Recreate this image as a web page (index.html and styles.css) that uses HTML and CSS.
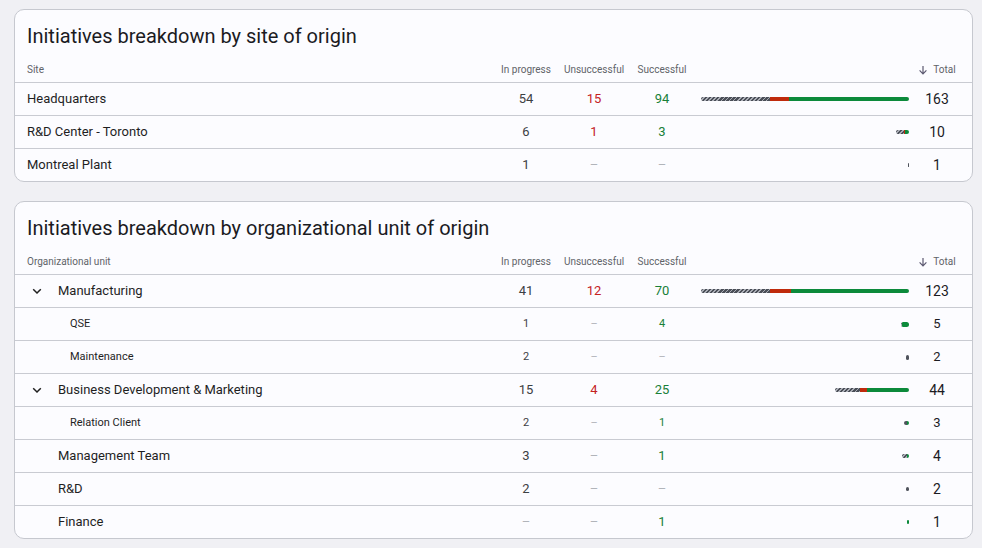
FILE: index.html
```html
<!DOCTYPE html>
<html lang="en">
<head>
<meta charset="utf-8">
<title>Initiatives breakdown</title>
<link rel="stylesheet" href="styles.css">
</head>
<body>
<main class="page">
  <section class="card">
    <h2 class="card-title">Initiatives breakdown by site of origin</h2>
    <div class="row head">
      <div class="name">Site</div>
      <div class="num">In progress</div>
      <div class="num">Unsuccessful</div>
      <div class="num">Successful</div>
      <div></div>
      <div class="num total-h"><svg class="sort" viewBox="0 0 10 10"><path d="M5 1V8.6M1.6 5.4L5 8.8L8.4 5.4"/></svg>Total</div>
    </div>
    <div class="row">
      <div class="name">Headquarters</div>
      <div class="num prog">54</div>
      <div class="num fail">15</div>
      <div class="num ok">94</div>
      <div class="barcell"><div class="bar"><span class="seg hatch" style="width:68.9px"></span><span class="seg red" style="width:19.1px"></span><span class="seg green" style="width:120px"></span></div></div>
      <div class="num total">163</div>
    </div>
    <div class="row">
      <div class="name">R&amp;D Center - Toronto</div>
      <div class="num prog">6</div>
      <div class="num fail">1</div>
      <div class="num ok">3</div>
      <div class="barcell"><div class="bar"><span class="seg hatch" style="width:7.7px"></span><span class="seg red" style="width:1.3px"></span><span class="seg green" style="width:3.8px"></span></div></div>
      <div class="num total">10</div>
    </div>
    <div class="row">
      <div class="name">Montreal Plant</div>
      <div class="num prog">1</div>
      <div class="num none">–</div>
      <div class="num none">–</div>
      <div class="barcell"><div class="bar"><span class="seg hatch solid" style="width:1.3px"></span></div></div>
      <div class="num total">1</div>
    </div>
  </section>

  <section class="card">
    <h2 class="card-title">Initiatives breakdown by organizational unit of origin</h2>
    <div class="row head">
      <div class="name">Organizational unit</div>
      <div class="num">In progress</div>
      <div class="num">Unsuccessful</div>
      <div class="num">Successful</div>
      <div></div>
      <div class="num total-h"><svg class="sort" viewBox="0 0 10 10"><path d="M5 1V8.6M1.6 5.4L5 8.8L8.4 5.4"/></svg>Total</div>
    </div>
    <div class="row">
      <div class="name unit"><span class="chev"><svg viewBox="0 0 12 12"><path d="M2.2 4.2L6 8L9.8 4.2"/></svg></span>Manufacturing</div>
      <div class="num prog">41</div>
      <div class="num fail">12</div>
      <div class="num ok">70</div>
      <div class="barcell"><div class="bar"><span class="seg hatch" style="width:69.3px"></span><span class="seg red" style="width:20.3px"></span><span class="seg green" style="width:118.4px"></span></div></div>
      <div class="num total">123</div>
    </div>
    <div class="row sub">
      <div class="name child">QSE</div>
      <div class="num prog">1</div>
      <div class="num none">–</div>
      <div class="num ok">4</div>
      <div class="barcell"><div class="bar tall"><span class="seg hatch" style="width:1.7px"></span><span class="seg green" style="width:6.8px"></span></div></div>
      <div class="num total">5</div>
    </div>
    <div class="row sub">
      <div class="name child">Maintenance</div>
      <div class="num prog">2</div>
      <div class="num none">–</div>
      <div class="num none">–</div>
      <div class="barcell"><div class="bar tall"><span class="seg hatch solid" style="width:3.4px"></span></div></div>
      <div class="num total">2</div>
    </div>
    <div class="row">
      <div class="name unit"><span class="chev"><svg viewBox="0 0 12 12"><path d="M2.2 4.2L6 8L9.8 4.2"/></svg></span>Business Development &amp; Marketing</div>
      <div class="num prog">15</div>
      <div class="num fail">4</div>
      <div class="num ok">25</div>
      <div class="barcell"><div class="bar"><span class="seg hatch" style="width:25.4px"></span><span class="seg red" style="width:6.8px"></span><span class="seg green" style="width:42.3px"></span></div></div>
      <div class="num total">44</div>
    </div>
    <div class="row sub">
      <div class="name child">Relation Client</div>
      <div class="num prog">2</div>
      <div class="num none">–</div>
      <div class="num ok">1</div>
      <div class="barcell"><div class="bar"><span class="seg hatch solid" style="width:3.4px"></span><span class="seg green" style="width:1.7px"></span></div></div>
      <div class="num total">3</div>
    </div>
    <div class="row">
      <div class="name unit"><span class="chev"></span>Management Team</div>
      <div class="num prog">3</div>
      <div class="num none">–</div>
      <div class="num ok">1</div>
      <div class="barcell"><div class="bar"><span class="seg hatch" style="width:5.1px"></span><span class="seg green" style="width:1.7px"></span></div></div>
      <div class="num total">4</div>
    </div>
    <div class="row">
      <div class="name unit"><span class="chev"></span>R&amp;D</div>
      <div class="num prog">2</div>
      <div class="num none">–</div>
      <div class="num none">–</div>
      <div class="barcell"><div class="bar"><span class="seg hatch solid" style="width:3.4px"></span></div></div>
      <div class="num total">2</div>
    </div>
    <div class="row">
      <div class="name unit"><span class="chev"></span>Finance</div>
      <div class="num none">–</div>
      <div class="num none">–</div>
      <div class="num ok">1</div>
      <div class="barcell"><div class="bar"><span class="seg green" style="width:1.7px"></span></div></div>
      <div class="num total">1</div>
    </div>
  </section>
</main>
</body>
</html>
```

FILE: styles.css
```css
* { box-sizing: border-box; }

html, body {
  margin: 0;
  padding: 0;
  background: #f0f0f4;
  font-family: Roboto, "Liberation Sans", Arial, sans-serif;
  color: #1f1f1f;
}

.page {
  padding: 9px 9px 0 14px;
  display: flex;
  flex-direction: column;
  gap: 19px;
}

.card {
  width: 959px;
  background: #fcfcff;
  border: 1px solid #c6c8cf;
  border-radius: 10px;
  overflow: hidden;
}

.card-title {
  margin: 0;
  padding: 14px 0 0 12px;
  font-size: 20px;
  line-height: 24px;
  font-weight: 400;
  color: #1b1b1f;
}

.row {
  display: grid;
  grid-template-columns: 1fr 68px 68px 68px 213px 56px;
  align-items: center;
  height: 33px;
  padding: 0 7px 1px 12px;
  border-top: 1px solid #c9cbd2;
  font-size: 13px;
}

.row.head {
  height: 34px;
  border-top: none;
  align-items: end;
  padding-bottom: 6px;
  font-size: 10px;
  line-height: 12px;
  color: #5f6368;
}

.name {
  white-space: nowrap;
  display: flex;
  align-items: center;
}

.num {
  text-align: center;
  font-variant-numeric: tabular-nums;
}

.total-h {
  display: flex;
  justify-content: center;
  align-items: center;
  gap: 5px;
}

.sort {
  width: 10px;
  height: 10px;
  fill: none;
  stroke: #5b5870;
  stroke-width: 1.2;
}

.prog { color: #3c4043; }
.fail { color: #c5221f; }
.ok { color: #188038; }
.none { color: #b1b4ba; }
.total { color: #1b1b1f; font-size: 14px; }

.barcell {
  display: flex;
  justify-content: flex-end;
  align-items: center;
  padding-top: 1px;
}

.bar {
  display: flex;
  height: 4px;
  border-radius: 2px;
  overflow: hidden;
}

.bar.tall { height: 5px; border-radius: 2.5px; }

.seg { display: block; height: 100%; }
.hatch { background: repeating-linear-gradient(135deg, #4a4e57 0 1.8px, #a9acb5 1.8px 2.9px); }
.hatch.solid { background: #4f535c; }
.red { background: #bf2a0c; }
.green { background: #0c8a3b; }

.chev {
  width: 31px;
  height: 14px;
  display: inline-flex;
  align-items: center;
  padding-left: 4px;
}

.chev svg {
  width: 12px;
  height: 12px;
  fill: none;
  stroke: #1f1f1f;
  stroke-width: 1.5;
}

.sub { font-size: 11px; }
.sub .total { font-size: 13px; }

.child { padding-left: 43px; color: #1f1f1f; }
```
